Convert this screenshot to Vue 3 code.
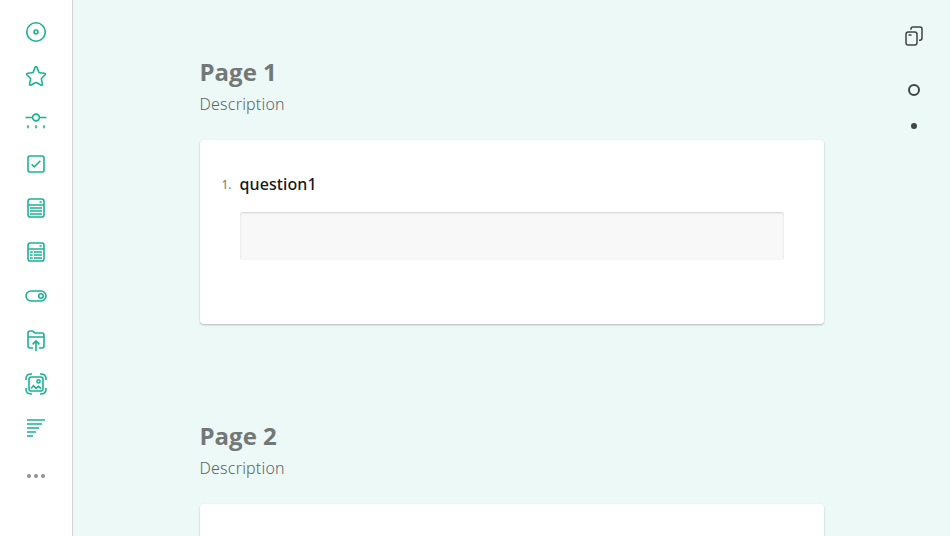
<script setup>
const tools = [
  { name: 'Radio group', d: 'M12 2.75a9.25 9.25 0 1 0 0 18.5a9.25 9.25 0 1 0 0-18.5ZM12 10a2 2 0 1 0 0 4a2 2 0 1 0 0-4Z' },
  { name: 'Rating', d: 'M11 3.4Q12 1.9 13 3.4L14.7 7.9Q15 8.6 15.8 8.7L20.3 9.2Q22.2 9.6 20.9 11L17.7 14.2Q17.2 14.7 17.4 15.4L18.4 19.8Q18.6 21.7 16.9 21L12.8 18.7Q12 18.3 11.2 18.7L7.1 21Q5.4 21.7 5.6 19.8L6.6 15.4Q6.8 14.7 6.3 14.2L3.1 11Q1.8 9.6 3.7 9.2L8.2 8.7Q9 8.6 9.3 7.9Z' },
  { name: 'Slider', d: 'M1.5 9.5H8.5M15.5 9.5H22.5M12 6.1a3.4 3.4 0 1 0 0 6.8a3.4 3.4 0 1 0 0-6.8ZM4 17.3V20.3M12 17.3V20.3M20 17.3V20.3' },
  { name: 'Checkboxes', d: 'M5.7 4H18.3Q20 4 20 5.7V18.3Q20 20 18.3 20H5.7Q4 20 4 18.3V5.7Q4 4 5.7 4ZM7.7 12.3L10.2 14.8L16.4 8.8' },
  { name: 'Dropdown', d: 'M6.3 3H17.7Q20 3 20 5.3V18.7Q20 21 17.7 21H6.3Q4 21 4 18.7V5.3Q4 3 6.3 3ZM4 9H20M15.5 6H17.7M6 12H18M6 15H18M6 18H18' },
  { name: 'Multi-select', d: 'M6.3 3H17.7Q20 3 20 5.3V18.7Q20 21 17.7 21H6.3Q4 21 4 18.7V5.3Q4 3 6.3 3ZM4 9H20M15.5 6H17.7M6 12H8.7M10 12H18M6 15H8.7M10 15H18M6 18H8.7M10 18H18' },
  { name: 'Yes/No', d: 'M7 7H17a5 5 0 0 1 0 10H7a5 5 0 0 1 0-10ZM17 9.75a2.25 2.25 0 1 0 0 4.5a2.25 2.25 0 1 0 0-4.5Z' },
  { name: 'File upload', d: 'M9 20H6Q4 20 4 18V5Q4 3 6 3H8.3Q9 3 9.6 4T11.2 5H18Q20 5 20 7V18Q20 20 18 20H15M4 9H20M12 23.3V13.2M8.6 16.4L12 13L15.4 16.4' },
  { name: 'Image picker', d: 'M7.3 5H16.7Q19 5 19 7.3V16.7Q19 19 16.7 19H7.3Q5 19 5 16.7V7.3Q5 5 7.3 5ZM14.5 7.8a1.6 1.6 0 1 0 0 3.2a1.6 1.6 0 1 0 0-3.2ZM7 16.6L9.5 13.6L12 16.3L14.5 14.3L17.2 16.6M2 8V7Q2 2 7 2H8M16 2H17Q22 2 22 7V8M22 16V17Q22 22 17 22H16M8 22H7Q2 22 2 17V16' },
  { name: 'Ranking', d: 'M3 4H21M3 8H18M3 12H15M3 16H12M3 20H9' },
]
const pages = [
  { title: 'Page 1', questions: ['question1'] },
  { title: 'Page 2', questions: [''] },
]
</script>

<template>
  <div class="creator">
    <nav class="toolbox">
      <button v-for="tool in tools" :key="tool.name" class="tool" :aria-label="tool.name">
        <svg class="icon" viewBox="0 0 24 24"><path :d="tool.d" /></svg>
      </button>
      <button class="tool more" aria-label="More">
        <svg class="dots" viewBox="0 0 24 24">
          <circle cx="5" cy="12" r="2" /><circle cx="12" cy="12" r="2" /><circle cx="19" cy="12" r="2" />
        </svg>
      </button>
    </nav>
    <main class="surface">
      <section v-for="page in pages" :key="page.title" class="page">
        <h1 class="title">{{ page.title }}</h1>
        <p class="description">Description</p>
        <div v-for="(question, i) in page.questions" :key="question" class="card">
          <template v-if="question">
            <div class="heading">
              <span class="number">{{ i + 1 }}.</span>
              <span class="name">{{ question }}</span>
            </div>
            <div class="field"></div>
          </template>
        </div>
      </section>
    </main>
    <aside class="navigator">
      <svg class="pages-icon" viewBox="0 0 24 24">
        <path d="M6.3 8H12.7Q15 8 15 10.3V18.7Q15 21 12.7 21H6.3Q4 21 4 18.7V10.3Q4 8 6.3 8ZM6.5 11H9.5M9 5.7V5Q9 3 11 3H18Q20 3 20 5V14Q20 16 18 16.3H17" />
      </svg>
      <span class="marker current"></span>
      <span class="marker"></span>
    </aside>
  </div>
</template>

<style>
body { overflow: hidden; background: #ecf9f7; }
</style>

<style scoped>
.creator {
  display: flex;
  height: 100vh;
  overflow: hidden;
  background: #ecf9f7;
  font-family: "Noto Sans", "Open Sans", sans-serif;
}
.toolbox {
  box-sizing: border-box;
  flex: none;
  display: flex;
  flex-direction: column;
  align-items: center;
  width: 73px;
  padding-top: 10px;
  background: #fff;
  border-right: 1px solid #d4d4d4;
}
.tool {
  display: flex;
  align-items: center;
  justify-content: center;
  flex: none;
  width: 44px;
  height: 44px;
  padding: 0;
  border: 0;
  background: none;
}
.more { margin-top: 4px; }
.icon, .dots, .pages-icon { display: block; width: 24px; height: 24px; }
.icon { fill: none; stroke: #19b394; stroke-width: 1.6; }
.dots { fill: #909090; }
.surface {
  flex: 1;
  display: flex;
  flex-direction: column;
  align-items: center;
  padding-top: 56px;
}
.page {
  flex: none;
  width: 624px;
  height: 364px;
}
.title {
  margin: 0;
  font-family: "Open Sans", sans-serif;
  font-size: 24px;
  line-height: 32px;
  font-weight: 700;
  color: #737877;
}
.description {
  margin: 4px 0 24px;
  font-size: 16px;
  line-height: 24px;
  font-weight: 300;
  letter-spacing: 0.2px;
  color: #5f6463;
}
.card {
  box-sizing: border-box;
  height: 184px;
  padding: 32px 40px;
  border-radius: 4px;
  background: #fff;
  box-shadow: 0 1px 2px rgba(0, 0, 0, 0.25);
}
.heading {
  display: flex;
  height: 24px;
  margin-left: -24px;
  line-height: 24px;
}
.number {
  box-sizing: border-box;
  width: 24px;
  padding: 1px 8px 0 0;
  text-align: right;
  font-size: 12px;
  color: #737373;
}
.name {
  font-size: 16px;
  font-weight: 500;
  letter-spacing: 0.1px;
  color: #161616;
}
.field {
  height: 48px;
  margin-top: 16px;
  border-radius: 3px;
  background: #f8f8f8;
  box-shadow: inset 0 1px 2px rgba(0, 0, 0, 0.15);
}
.navigator {
  flex: none;
  display: flex;
  flex-direction: column;
  align-items: center;
  width: 72px;
  padding-top: 24px;
  margin-left: -72px;
}
.pages-icon { fill: none; stroke: #404444; stroke-width: 1.5; }
.marker {
  box-sizing: border-box;
  width: 6px;
  height: 6px;
  margin-top: 27px;
  border-radius: 50%;
  background: #404444;
}
.current {
  width: 12px;
  height: 12px;
  margin-top: 36px;
  border: 2px solid #404444;
  background: none;
}
</style>
